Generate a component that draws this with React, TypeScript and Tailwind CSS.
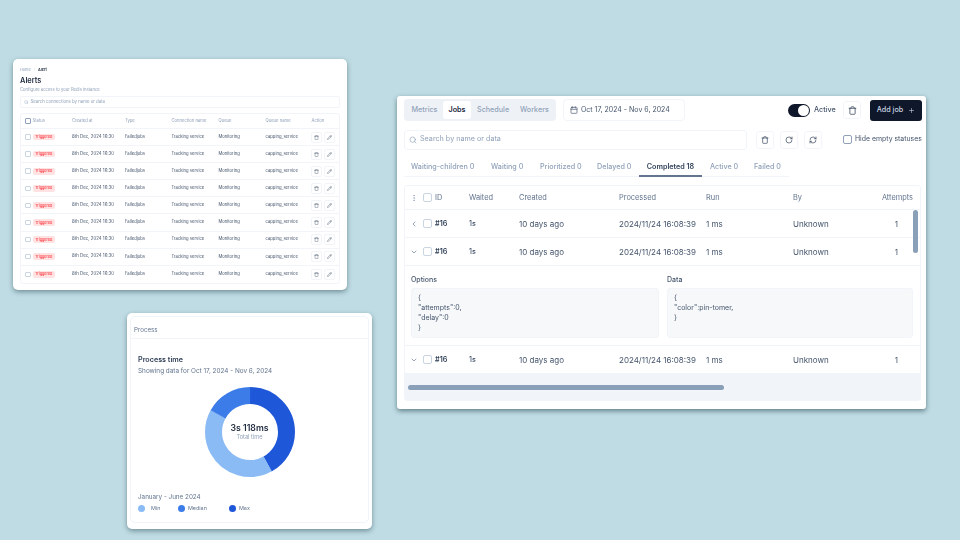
import React from 'react';
import { Calendar, ChevronDown, ChevronLeft, EllipsisVertical, Pencil, Plus, RefreshCw, RotateCw, Search, Trash } from 'lucide-react';

const alertCols = 'grid grid-cols-[47px_53px_46.5px_47px_47px_46px_1fr] items-center pl-[4px]';

const AlertsCard: React.FC = () => (
  <div className="absolute left-[13px] top-[59px] flex h-[231px] w-[334px] flex-col rounded-[5px] bg-white px-[7px] pt-[9px] shadow-[0_2px_5px_rgba(20,50,60,0.45)] blur-[0.3px]">
    <div className="flex h-[4px] items-center gap-[3px] text-[3.8px] leading-none text-slate-400">
      <span>Home</span>
      <span className="text-slate-300">/</span>
      <span className="font-semibold text-slate-800">Alert</span>
    </div>
    <div className="mt-[4px] text-[7.4px] font-semibold leading-[9px] text-slate-800">Alerts</div>
    <div className="mt-[2px] text-[4.2px] leading-[5px] text-slate-400">Configure access to your Redis instance</div>
    <div className="mt-[4px] flex h-[12px] shrink-0 items-center gap-[2px] rounded-[2px] border border-slate-100 pl-[3px] text-[4.3px] text-slate-400">
      <Search size={4.5} />
      <span>Search connections by name or data</span>
    </div>
    <div className="mt-[5px] rounded-[3px] border border-slate-100">
      <div className={`${alertCols} h-[15px] border-b border-slate-100 text-[4.2px] text-slate-400`}>
        <div className="flex items-center gap-[2px]">
          <span className="h-[5.5px] w-[5.5px] rounded-[1px] border-[0.5px] border-slate-400" />
          <span>Status</span>
        </div>
        <span>Created at</span>
        <span>Type</span>
        <span>Connection name</span>
        <span>Queue</span>
        <span>Queue name</span>
        <span>Action</span>
      </div>
      {Array.from({ length: 9 }).map((_, i) => (
        <div key={i} className={`${alertCols} h-[17.1px] border-b border-slate-100 text-[4.2px] text-slate-600 last:border-b-0`}>
          <div className="flex items-center gap-[2px]">
            <span className="h-[5.5px] w-[5.5px] rounded-[1px] border-[0.5px] border-slate-300" />
            <span className="rounded-[2px] bg-red-100 px-[2.5px] py-[0.5px] text-[3.8px] text-red-500">Triggered</span>
          </div>
          <span className="text-[4.4px]">8th Dec, 2024 16:30</span>
          <span>Failedjobs</span>
          <span>Tracking service</span>
          <span>Monitoring</span>
          <span>capping_service</span>
          <div className="-ml-[1px] flex gap-[2px] text-slate-600">
            <span className="flex h-[11px] w-[11px] items-center justify-center rounded-[2px] border border-slate-100"><Trash size={5} /></span>
            <span className="flex h-[11px] w-[11px] items-center justify-center rounded-[2px] border border-slate-100"><Pencil size={5} /></span>
          </div>
        </div>
      ))}
    </div>
  </div>
);

const Donut: React.FC = () => {
  const r = 36.5;
  const c = 2 * Math.PI * r;
  const parts = [
    { from: 0, to: 151, color: '#1f57d9' },
    { from: 151, to: 299, color: '#8abbf5' },
    { from: 299, to: 360, color: '#3b7ce8' },
  ];
  return (
    <svg width="92" height="92" viewBox="0 0 92 92" className="block">
      {parts.map((p) => (
        <circle
          key={p.color}
          cx="46"
          cy="46"
          r={r}
          fill="none"
          stroke={p.color}
          strokeWidth="17"
          strokeDasharray={`${((p.to - p.from) / 360) * c} ${c}`}
          transform={`rotate(${p.from - 90} 46 46)`}
        />
      ))}
    </svg>
  );
};

const ProcessCard: React.FC = () => (
  <div className="absolute left-[127px] top-[313px] h-[216px] w-[245px] rounded-[5px] bg-white p-[3px] shadow-[0_2px_5px_rgba(20,50,60,0.45)] blur-[0.25px]">
    <div className="flex h-[207px] flex-col rounded-[5px] border border-slate-100">
      <div className="flex h-[22px] shrink-0 items-center border-b border-slate-100 pl-[3px] pt-[5px] text-[6.2px] text-slate-500">Process</div>
      <div className="pl-[7px] pt-[16px]">
        <div className="text-[7.2px] font-semibold leading-[10px] text-slate-700">Process time</div>
        <div className="mt-[1px] text-[6.4px] leading-[10px] text-slate-500">Showing data for Oct 17, 2024 - Nov 6, 2024</div>
        <div className="relative ml-[65.5px] mt-[10px] w-[92px]">
          <Donut />
          <div className="absolute inset-0 flex flex-col items-center justify-center">
            <span className="text-[8.7px] font-semibold leading-[11px] text-slate-800">3s 118ms</span>
            <span className="text-[5.6px] leading-[7px] text-slate-400">Total time</span>
          </div>
        </div>
        <div className="mt-[15px] text-[6.3px] leading-[9px] text-slate-500">January - June 2024</div>
        <div className="mt-[2px] flex items-center text-[5.4px] leading-[8px] text-slate-500">
          <span className="h-[7px] w-[7px] rounded-full bg-[#8abbf5]" />
          <span className="ml-[6px] w-[27px]">Min</span>
          <span className="h-[7px] w-[7px] rounded-full bg-[#3b7ce8]" />
          <span className="ml-[3px] w-[41px]">Median</span>
          <span className="h-[7px] w-[7px] rounded-full bg-[#1f57d9]" />
          <span className="ml-[3px]">Max</span>
        </div>
      </div>
    </div>
  </div>
);

const jobCols = 'grid grid-cols-[30px_34px_50px_100px_87px_87px_1fr] items-center';

const JobRow: React.FC<{ open?: boolean }> = ({ open }) => (
  <div className={`${jobCols} h-[28px] border-b border-slate-100 bg-white text-[8px] leading-[12px] text-slate-600`}>
    <div className="flex items-center">
      <span className="flex w-[18px] justify-center text-slate-500">
        {open ? <ChevronDown size={8} /> : <ChevronLeft size={8} />}
      </span>
      <span className="h-[9px] w-[9px] rounded-[2px] border border-slate-300" />
    </div>
    <span className="text-[7.2px] leading-[12px] font-semibold text-slate-700">#16</span>
    <span className="text-[7.2px] leading-[12px] font-medium">1s</span>
    <span>10 days ago</span>
    <span>2024/11/24 16:08:39</span>
    <span>1 ms</span>
    <div className="flex justify-between pr-[22px]">
      <span>Unknown</span>
      <span>1</span>
    </div>
  </div>
);

const IconBtn: React.FC<{ children: React.ReactNode }> = ({ children }) => (
  <span className="flex h-[18px] w-[18px] items-center justify-center rounded-[3px] border border-slate-100 text-slate-700">{children}</span>
);

const JobsCard: React.FC = () => (
  <div className="absolute left-[397px] top-[96px] h-[313px] w-[529px] rounded-[3px] bg-white pl-[7px] pt-[3px] shadow-[0_2px_5px_rgba(20,50,60,0.55)] blur-[0.25px]">
    <div className="flex h-[22px] items-center">
      <div className="flex h-[22px] w-[152px] items-center rounded-[4px] bg-[#eef2f6] pl-[2px] text-[7.2px] font-medium text-slate-400">
        <span className="w-[37px] text-center">Metrics</span>
        <span className="flex h-[18px] w-[28px] items-center justify-center rounded-[3px] bg-white font-semibold text-slate-800">Jobs</span>
        <span className="ml-[6px] w-[31px] whitespace-nowrap text-center">Schedule</span>
        <span className="ml-[12px] w-[28px] text-center">Workers</span>
      </div>
      <div className="ml-[7px] flex h-[22px] w-[122px] items-center gap-[3px] rounded-[4px] border border-slate-100 pl-[6px] text-[7px] text-slate-600">
        <Calendar size={8} />
        <span>Oct 17, 2024 - Nov 6, 2024</span>
      </div>
      <div className="ml-[103px] h-[13px] w-[22px] rounded-full bg-[#0f172a] p-[1px]">
        <div className="ml-auto h-[11px] w-[11px] rounded-full bg-white" />
      </div>
      <span className="ml-[4px] w-[21px] text-[7.2px] font-medium text-slate-600">Active</span>
      <span className="ml-[8px]"><IconBtn><Trash size={9} /></IconBtn></span>
      <div className="ml-[9px] flex h-[21px] w-[52px] items-center justify-center gap-[5px] rounded-[3px] bg-[#0f172a] text-[7.2px] font-medium text-slate-300">
        Add job <Plus size={7} />
      </div>
    </div>
    <div className="mt-[8px] flex h-[21px] items-center">
      <div className="flex h-[20px] w-[343px] items-center gap-[3px] rounded-[3px] border border-slate-100 pl-[4px] text-[7.2px] text-slate-400">
        <Search size={8} />
        <span>Search by name or data</span>
      </div>
      <div className="ml-[9px] flex gap-[6px]">
        <IconBtn><Trash size={8} /></IconBtn>
        <IconBtn><RotateCw size={8} /></IconBtn>
        <IconBtn><RefreshCw size={8} /></IconBtn>
      </div>
      <div className="ml-[21px] flex items-center gap-[3px] whitespace-nowrap text-[6.9px] text-slate-600">
        <span className="h-[9px] w-[9px] rounded-[2px] border border-slate-400" />
        <span>Hide empty statuses</span>
      </div>
    </div>
    <div className="mt-[8px] flex h-[19px] w-[385px] items-start whitespace-nowrap border-b border-slate-100 pl-[7px] pt-[4px] text-[7.2px] font-medium leading-[10px] text-slate-400">
      <span className="w-[80px]">Waiting-children 0</span>
      <span className="w-[49px]">Waiting 0</span>
      <span className="w-[57px]">Prioritized 0</span>
      <span className="w-[42px]">Delayed 0</span>
      <span className="-mt-[4px] flex h-[19px] w-[63px] shrink-0 items-start justify-center border-b-2 border-slate-500 pt-[4px] font-semibold text-slate-700">Completed 18</span>
      <span className="ml-[8px] w-[44px]">Active 0</span>
      <span>Failed 0</span>
    </div>
    <div className="relative mt-[8px] h-[216px] w-[517px] overflow-hidden rounded-[3px] border border-slate-100 bg-[#f1f5f9]">
      <div className={`${jobCols} h-[24px] border-b border-slate-100 bg-white text-[7.4px] text-slate-500`}>
        <div className="flex items-center">
          <span className="flex w-[18px] justify-center text-slate-400"><EllipsisVertical size={8} /></span>
          <span className="h-[9px] w-[9px] rounded-[2px] border border-slate-300" />
        </div>
        <span>ID</span>
        <span>Waited</span>
        <span>Created</span>
        <span>Processed</span>
        <span>Run</span>
        <div className="flex justify-between pr-[7px]">
          <span>By</span>
          <span>Attempts</span>
        </div>
      </div>
      <JobRow />
      <JobRow open />
      <div className="flex h-[80px] gap-[8px] border-b border-slate-100 bg-white pl-[6px] pt-[8px] text-[7px]">
        <div className="w-[248px]">
          <div className="font-medium leading-[11px] text-slate-600">Options</div>
          <div className="mt-[3px] h-[50px] rounded-[3px] border border-slate-100 bg-[#f6f8fa] pl-[6px] pt-[4px] leading-[10px] text-slate-600">
            <div>{'{'}</div>
            <div>"attempts":0,</div>
            <div>"delay":0</div>
            <div>{'}'}</div>
          </div>
        </div>
        <div className="w-[246px]">
          <div className="font-medium leading-[11px] text-slate-600">Data</div>
          <div className="mt-[3px] h-[50px] rounded-[3px] border border-slate-100 bg-[#f6f8fa] pl-[6px] pt-[4px] leading-[10px] text-slate-600">
            <div>{'{'}</div>
            <div>"color":pin-tomer,</div>
            <div>{'}'}</div>
          </div>
        </div>
      </div>
      <JobRow open />
      <div className="absolute left-[3px] top-[199px] h-[5px] w-[316px] rounded-full bg-[#8a9fb8]" />
      <div className="absolute right-[2px] top-[24px] h-[43px] w-[5px] rounded-full bg-[#8a9fb8]" />
    </div>
  </div>
);

export default function App() {
  return (
    <div className="relative h-[540px] w-[960px] overflow-hidden bg-[#bfdce4] font-['Inter',sans-serif]">
      <AlertsCard />
      <ProcessCard />
      <JobsCard />
    </div>
  );
}
